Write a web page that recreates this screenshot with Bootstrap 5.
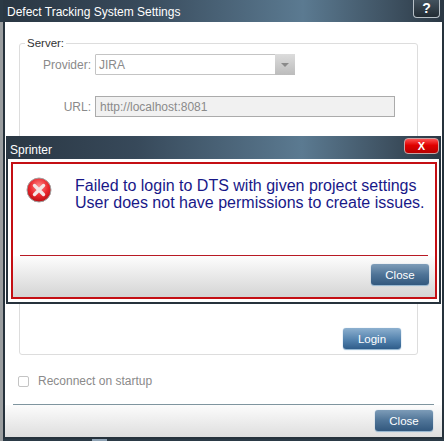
<!DOCTYPE html>
<html lang="en"><head><meta charset="utf-8"><title>Settings</title>
<link href="https://cdn.jsdelivr.net/npm/bootstrap@5.3.0/dist/css/bootstrap.min.css" rel="stylesheet">
<style>
html,body{height:100%;margin:0}
body{width:444px;height:441px;overflow:hidden;position:relative;background:#2b3a46;font-family:"Liberation Sans",Arial,sans-serif;font-size:12px;color:#888}
.desk-strip{position:absolute;left:0;top:22px;bottom:0;width:3px;background:#9a9d9f}
.desk-tab{position:absolute;left:92px;bottom:0;width:15px;height:3px;background:#8fa3b5}
.win{position:absolute;background:#fff}
.win-main{left:3px;top:0;width:441px;height:439px;border:solid #26323c;border-width:0 2px 2px 2px}
.win-title{background:linear-gradient(90deg,#2a3743 0%,#37495a 30%,#5b7a91 68%,#3e5161 88%,#2a3743 100%);color:#fff;flex:none}
.win-main .win-title{height:22px;margin:0 -2px;padding:3px 0 0 4px;font-size:12px}
.help-btn{width:27px;height:18px;border:1px solid #b7c0c7;border-top:0;border-radius:0 0 4px 4px;background:linear-gradient(#43525e,#222c34);color:#fff;font-size:14px;font-weight:700;line-height:17px;text-align:center;margin-right:4px;margin-top:-3px}
.main-body{padding:15px 15px 0 14px;height:382px;flex:none}
.srv-box{border:1px solid #ddd;border-radius:3px;height:318px;padding:0 16px 0 0;position:relative;margin:0;width:399px}
.srv-box legend{float:none;width:auto;font-size:11.5px;line-height:13px;color:#333;margin:0 0 4px 5px;padding:0 2px}
.f-label{width:71px;text-align:right;margin-right:4px;padding-top:1px;font-size:12px;color:#8a8a8a}
.f-row{height:21px}
.mt-gap{margin-top:21px}
.login-row{margin-top:211px}
.sel-box{width:200px;height:21px;border:1px solid #c4c4c4;border-radius:1px;padding:3px 3px 1px;color:#8a8a8a;font-size:12px;line-height:15px}
.sel-box span:first-child{flex:1}
.sel-arrow{width:20px;height:21px;margin:-4px -4px;background:linear-gradient(#dcdcdc,#bcbcbc);display:flex;align-items:center;justify-content:center}
.sel-arrow i{border:4px solid transparent;border-top:4px solid #8a8a8a;border-bottom:0;width:0;height:0}
.url-box{width:300px;height:21px;border:1px solid #ababab;border-radius:0;background:#f1f1f1;color:#8a8a8a;font-size:12px;padding:0 4px;line-height:20px}
.blue-btn{width:58px;height:21px;padding:0;border:0;border-radius:3px;color:#fff;font-size:11.5px;line-height:20px;background:linear-gradient(#7d9cb8,#4f7497 50%,#32587e);box-shadow:0 1px 1px #8fb3cf,0 0 1px #9fc0da}
.btn-dim{background:linear-gradient(#8db0cf,#4f7fab 60%,#2f5d8a)}
.tick{width:11px;height:11px;border:1px solid #c4c4c4;border-radius:2px;background:#fff;margin-right:9px;flex:none}
.opt-row{margin-top:19px;margin-left:-1px;color:#8a8a8a;font-size:12px;height:14px;line-height:14px;width:300px}
.main-rule{height:1px;background:#7f959f;margin:0 8px;flex:none}
.main-foot{flex:1;background:linear-gradient(#fcfcfc,#dedede);padding:5px 9px 0 0}
.win-err{left:6px;top:136px;width:435px;height:168px;border:solid #26323c;border-width:0 2px 2px 2px}
.win-err .win-title{height:23px;margin:0 -2px;padding:5px 0 0 4px;font-size:12px}
.x-btn{width:35px;height:16px;margin:-3px 2px 0 0;border:1px solid #c9a3a3;border-radius:4px;background:linear-gradient(#ff5050,#e00000 45%,#b80000);color:#fff;font-weight:700;font-size:11px;line-height:14px;text-align:center}
.err-frame{margin:3px 2px 0 3px;height:137px;border:2px solid #c40f14;background:#fff}
.err-top{height:91px;flex:none;padding:13px 0 0 13px}
.err-icon{width:26px;height:26px;flex:none}
.err-text{font-size:16px;line-height:17px;color:#181888;white-space:nowrap;margin-left:23px}
.err-rule{height:1px;flex:none;background:#b81a24;margin:0 7px}
.err-foot{flex:1;background:linear-gradient(#fdfdfd,#d4d4d4);padding:8px 6px 0 0}
</style></head>
<body>
<div class="desk-strip"></div>
<div class="desk-tab"></div>
<div class="win win-main d-flex flex-column">
  <div class="win-title d-flex justify-content-between align-items-start">
    <span>Defect Tracking System Settings</span>
    <div class="help-btn">?</div>
  </div>
  <div class="main-body">
    <fieldset class="srv-box">
      <legend>Server:</legend>
      <div class="d-flex align-items-center f-row"><span class="f-label">Provider:</span>
        <div class="sel-box d-flex"><span>JIRA</span><span class="sel-arrow"><i></i></span></div></div>
      <div class="d-flex align-items-center f-row mt-gap"><span class="f-label">URL:</span>
        <div class="url-box">http://localhost:8081</div></div>
      <div class="d-flex justify-content-end login-row"><button type="button" class="btn blue-btn btn-dim">Login</button></div>
    </fieldset>
    <div class="d-flex align-items-center opt-row"><span class="tick"></span><span>Reconnect on startup</span></div>
  </div>
  <div class="main-rule"></div>
  <div class="main-foot d-flex justify-content-end"><button type="button" class="btn blue-btn">Close</button></div>
</div>
<div class="win win-err d-flex flex-column">
  <div class="win-title d-flex justify-content-between align-items-start">
    <span>Sprinter</span>
    <div class="x-btn">X</div>
  </div>
  <div class="err-frame d-flex flex-column">
    <div class="err-top d-flex align-items-start">
      <svg class="err-icon" viewBox="0 0 26 26" aria-hidden="true">
        <defs><radialGradient id="rg" cx="50%" cy="35%" r="65%"><stop offset="0" stop-color="#ff8a8a"/><stop offset=".6" stop-color="#e9262c"/><stop offset="1" stop-color="#b80d12"/></radialGradient></defs>
        <circle cx="13" cy="13" r="12" fill="url(#rg)" stroke="#a0a0a0" stroke-width="1"/>
        <path d="M8.5 8.5 17.5 17.5M17.5 8.5 8.5 17.5" stroke="#f4e6e6" stroke-width="3.4" stroke-linecap="round"/>
      </svg>
      <div class="err-text">Failed to login to DTS with given project settings<br>User does not have permissions to create issues.</div>
    </div>
    <div class="err-rule"></div>
    <div class="err-foot d-flex justify-content-end"><button type="button" class="btn blue-btn">Close</button></div>
  </div>
</div>
</body></html>
